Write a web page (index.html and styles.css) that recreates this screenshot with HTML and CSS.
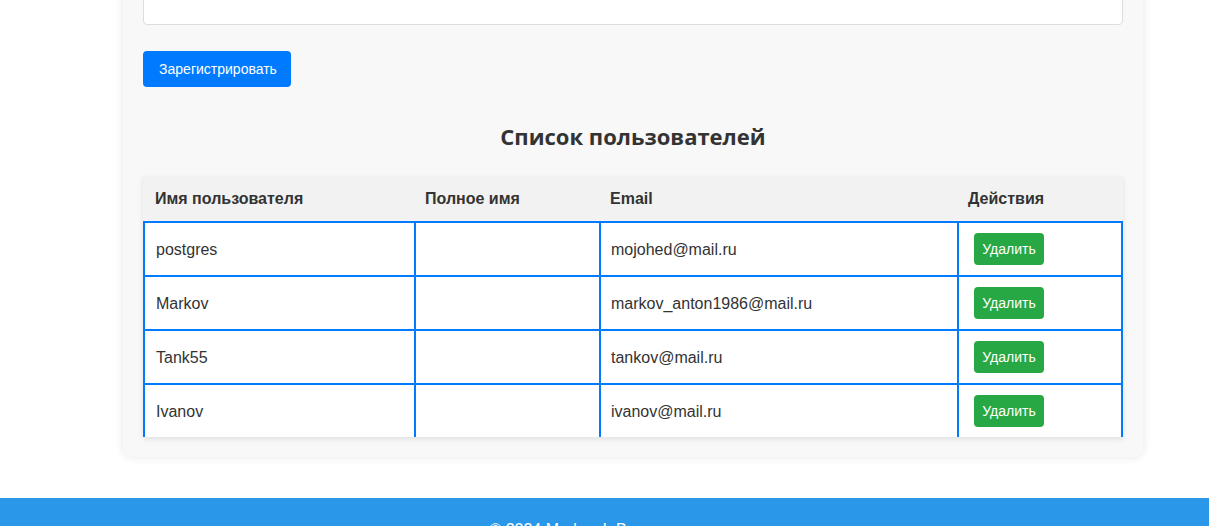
FILE: index.html
```html
<!DOCTYPE html>
<html lang="ru">
<head>
<meta charset="utf-8">
<title>Пользователи</title>
<link rel="stylesheet" href="styles.css">
</head>
<body>
<main class="card">
  <input class="field" type="text">
  <button class="btn btn-primary" type="button">Зарегистрировать</button>
  <h2 class="title">Список пользователей</h2>
  <table class="users">
    <colgroup>
      <col class="c1"><col class="c2"><col class="c3"><col class="c4">
    </colgroup>
    <thead>
      <tr><th>Имя пользователя</th><th>Полное имя</th><th>Email</th><th>Действия</th></tr>
    </thead>
    <tbody>
      <tr><td>postgres</td><td></td><td>mojohed@mail.ru</td><td><button class="btn btn-del" type="button">Удалить</button></td></tr>
      <tr><td>Markov</td><td></td><td>markov_anton1986@mail.ru</td><td><button class="btn btn-del" type="button">Удалить</button></td></tr>
      <tr><td>Tank55</td><td></td><td>tankov@mail.ru</td><td><button class="btn btn-del" type="button">Удалить</button></td></tr>
      <tr><td>Ivanov</td><td></td><td>ivanov@mail.ru</td><td><button class="btn btn-del" type="button">Удалить</button></td></tr>
    </tbody>
  </table>
</main>
<footer class="footer">
  <div class="footer-inner">© 2024 Markov I. Все права защищены</div>
</footer>
</body>
</html>
```
FILE: styles.css
```css
* { box-sizing: border-box; }
html, body { margin: 0; padding: 0; }
body {
  font-family: "Liberation Sans", Arial, sans-serif;
  color: #333;
  background: #fff;
  overflow: hidden;
}
.card {
  width: 1020px;
  margin: -35px 0 41px 123px;
  padding: 20px;
  background: #f8f8f8;
  border-radius: 8px;
  box-shadow: 0 0 10px rgba(0,0,0,0.1);
  display: flex;
  flex-direction: column;
  align-items: flex-start;
}
.field {
  display: block;
  width: 980px;
  height: 40px;
  border: 1px solid #ddd;
  border-radius: 4px;
  background: #fff;
  margin: 0;
}
.btn {
  font-family: "Liberation Sans", Arial, sans-serif;
  border: none;
  color: #fff;
  cursor: pointer;
}
.btn-primary {
  margin-top: 26px;
  height: 36px;
  width: 148px;
  padding: 0 0 0 2px;
  font-size: 14px;
  background: #007bff;
  border-radius: 4px;
}
.title {
  align-self: stretch;
  text-align: center;
  font-family: "Open Sans", "Noto Sans", sans-serif;
  font-size: 22px;
  font-weight: 700;
  color: #333;
  margin: 34px 0 25px;
  line-height: 30px;
}
.users {
  width: 980px;
  border-collapse: separate;
  border-spacing: 0;
  table-layout: fixed;
  background: #fff;
  box-shadow: 0 2px 5px rgba(0,0,0,0.1);
  font-size: 16px;
}
.c1 { width: 271px; }
.c2 { width: 185px; }
.c3 { width: 358px; }
.c4 { width: 166px; }
.users th {
  background: #f2f2f2;
  text-align: left;
  font-weight: 700;
  padding: 13px 11px;
  line-height: 19px;
}
.users th:first-child { padding-left: 12px; }
.users td {
  border-top: 2px solid #007bff;
  border-left: 2px solid #007bff;
  padding: 10px;
  height: 54px;
  line-height: 19px;
}
.users td:first-child { padding-left: 11px; }
.users td:last-child { border-right: 2px solid #007bff; }
.btn-del {
  margin-left: 5px;
  background: #28a745;
  border-radius: 4px;
  font-size: 14px;
  height: 32px;
  width: 70px;
  padding: 0;
  vertical-align: middle;
}
.footer {
  background: #2a97e8;
  color: #fff;
  padding: 22px 0;
  font-size: 16px;
  line-height: 20px;
}
.footer-inner {
  width: 1020px;
  margin-left: 123px;
  text-align: center;
}
```
